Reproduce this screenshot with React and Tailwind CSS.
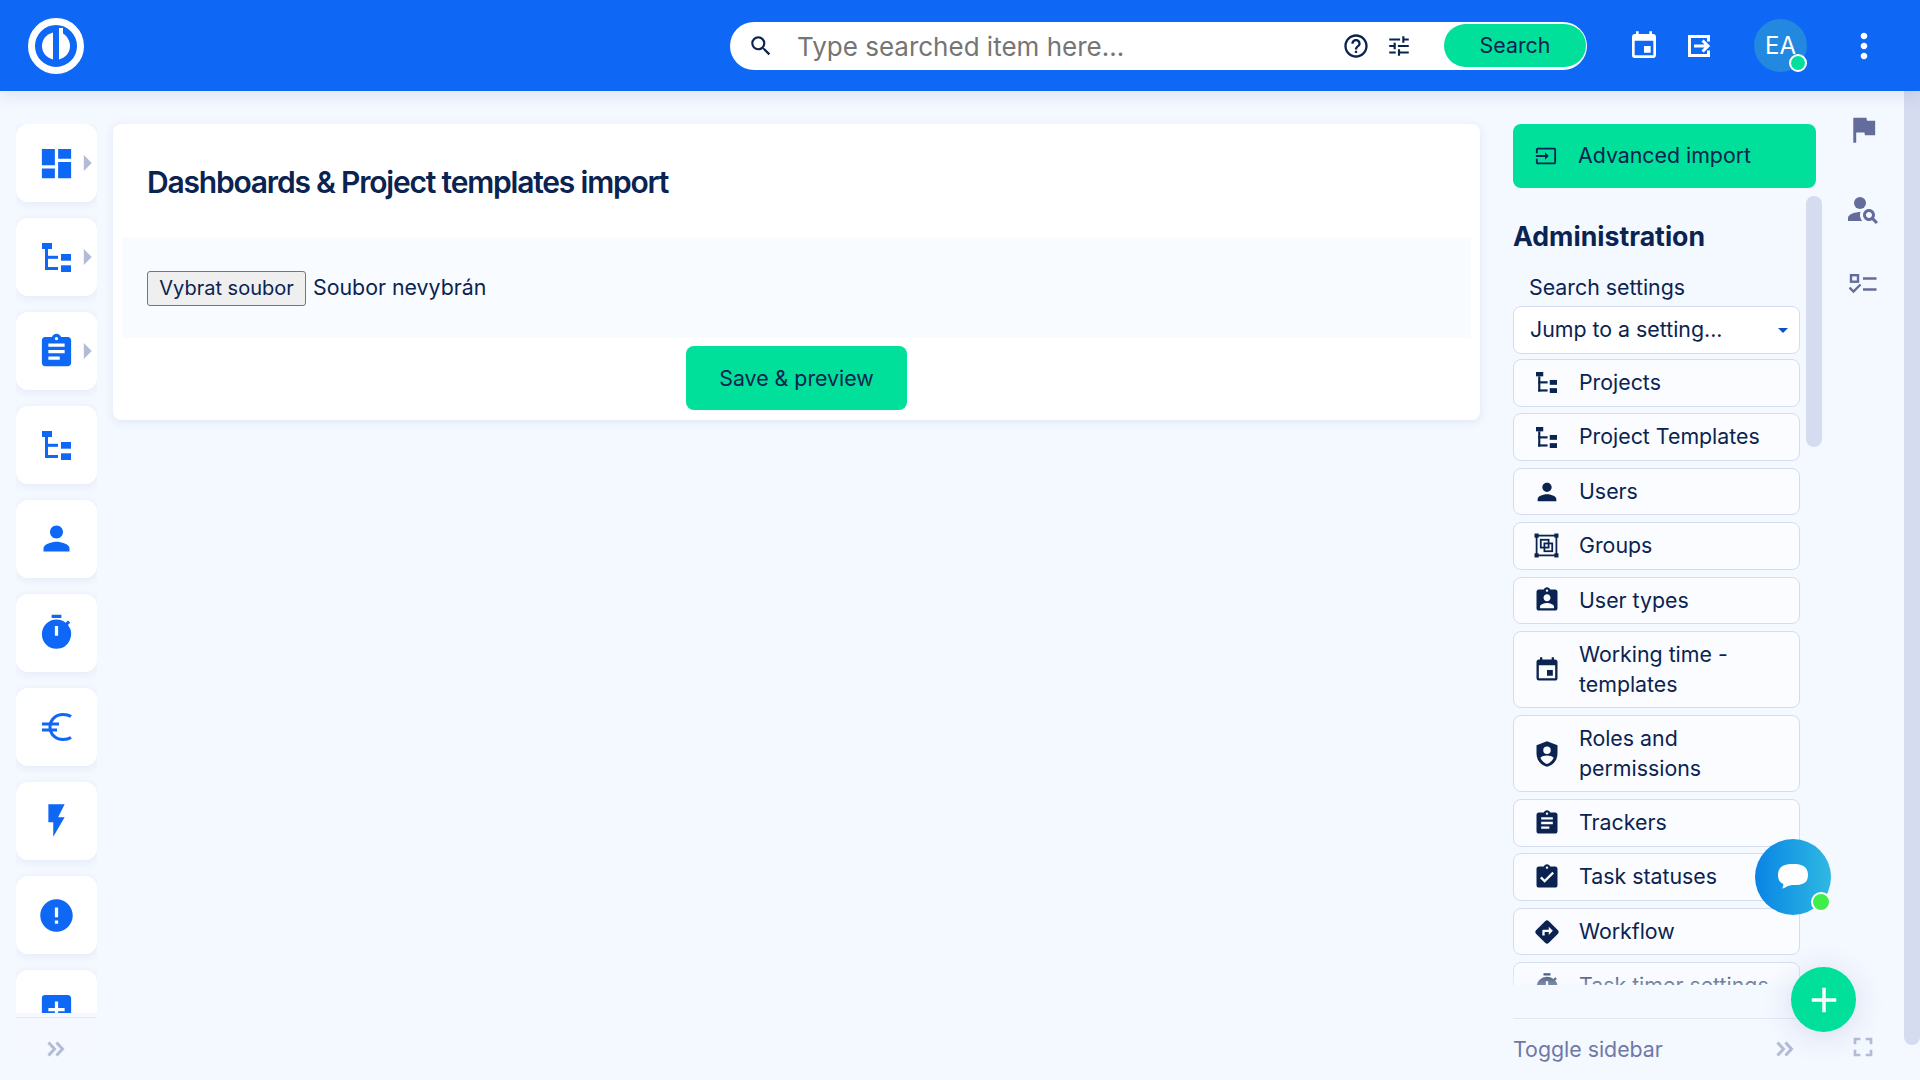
import {
  MdDashboard, MdAssignment, MdPerson, MdTimer, MdFlashOn, MdError, MdAddBox, MdSearch, MdHelpOutline, MdTune,
  MdEvent, MdMoreVert, MdFlag, MdPersonSearch, MdAssignmentInd, MdAssignmentTurnedIn, MdDirections,
  MdAdd, MdFullscreen, MdArrowRight, MdArrowDropDown, MdInput,
} from 'react-icons/md';

const font = "font-['Inter','Noto_Sans',sans-serif]";

function TreeIcon({ className }) {
  return (
    <svg viewBox="0 0 29 29" className={className} fill="currentColor">
      <rect x="0" y="0" width="10" height="6" />
      <rect x="3" y="6" width="3" height="21" />
      <rect x="3" y="12.800" width="13" height="3" />
      <rect x="3" y="24" width="13" height="3" />
      <rect x="19" y="11" width="10" height="6.700" />
      <rect x="19" y="22.300" width="10" height="6.700" />
    </svg>
  );
}

function GroupsIcon({ className }) {
  return (
    <svg viewBox="0 0 24 24" className={className} fill="none" stroke="currentColor" strokeWidth="1.700">
      <rect x="2.500" y="2.500" width="19" height="19" />
      <rect x="6.500" y="6.500" width="7.500" height="7.500" />
      <rect x="10" y="10" width="7.500" height="7.500" />
      <g fill="currentColor" stroke="none">
        <rect x="0.500" y="0.500" width="4" height="4" />
        <rect x="19.500" y="0.500" width="4" height="4" />
        <rect x="0.500" y="19.500" width="4" height="4" />
        <rect x="19.500" y="19.500" width="4" height="4" />
      </g>
    </svg>
  );
}

function ShieldIcon({ className }) {
  return (
    <svg viewBox="0 0 24 24" className={className} fill="currentColor">
      <path d="M12 1 3 4.500v7c0 5.500 3.800 10.300 9 11.500 5.200-1.200 9-6 9-11.500v-7L12 1zm0 4.500a3.200 3.200 0 1 1 0 6.400 3.200 3.200 0 0 1 0-6.400zm0 15c-2.600-.8-4.700-2.800-5.700-5.300 1.300-1.300 3.400-2 5.700-2s4.400.7 5.700 2c-1 2.500-3.100 4.500-5.700 5.300z" />
    </svg>
  );
}

function LogoIcon({ className }) {
  return (
    <svg viewBox="0 0 56 56" className={className}>
      <circle cx="28" cy="28" r="24.500" fill="none" stroke="#fff" strokeWidth="7" />
      <path d="M25 14.500v27C18 39.500 14 34.500 14 28s4-11.500 11-13.500z" fill="#fff" />
      <path d="M31 10v31.500c7-2 11-7 11-13.500 0-5.500-3-10-7-12.500V10h-4z" fill="#fff" />
    </svg>
  );
}

function ChatIcon({ className }) {
  return (
    <svg viewBox="0 0 32 28" className={className} fill="#fff">
      <path d="M16 1c9 0 15 2.500 15 11s-6 10-14 10c-3 0-5 .5-7 1.500-2 1-3.500 2-5 2 1-1.500 1.500-3 1.300-4.500C2.500 19.500 1 16 1 12 1 3.500 7 1 16 1z" />
    </svg>
  );
}

function EuroIcon({ className }) {
  return (
    <svg viewBox="0 0 30 28" className={className} fill="none" stroke="currentColor" strokeWidth="3">
      <path d="M29 3.500C26.500 1.800 24 1.500 21 1.500 13.500 1.500 8 7 8 14s5.500 12.500 13 12.500c3 0 5.500-.3 8-2" />
      <path d="M0 11h17M0 17h15" />
    </svg>
  );
}

function ExitIcon({ className }) {
  return (
    <svg viewBox="0 0 24 24" className={className} fill="currentColor">
      <path d="M1 1h22v6.500h-3V4H4v16h16v-3.500h3V23H1z" />
      <path d="M7 10.500h10.500l-3-3L16.600 5.400 23.200 12l-6.600 6.600-2.100-2.100 3-3H7z" />
    </svg>
  );
}

function CheckListIcon({ className }) {
  return (
    <svg viewBox="0 0 28 21" className={className} fill="none" stroke="currentColor" strokeWidth="2.400">
      <rect x="2" y="1.200" width="7" height="6.500" />
      <path d="M14 4.500h13.500M14 15.500h13.500" />
      <path d="M0.500 13.500l4 4 7-7" />
    </svg>
  );
}

function ChevronsIcon({ className }) {
  return (
    <svg viewBox="0 0 18 16" className={className} fill="none" stroke="currentColor" strokeWidth="3">
      <path d="M1.500 1.500 7.500 8l-6 6.500M9.500 1.500 15.500 8l-6 6.500" />
    </svg>
  );
}

const tiles = [
  { icon: MdDashboard, arrow: true, size: 'w-[39px] h-[39px]' },
  { icon: TreeIcon, arrow: true, size: 'w-[29px] h-[29px]' },
  { icon: MdAssignment, arrow: true, size: 'w-[39px] h-[39px]' },
  { icon: TreeIcon, size: 'w-[29px] h-[29px]' },
  { icon: MdPerson, size: 'w-[39px] h-[39px] -mt-[1px]' },
  { icon: MdTimer, size: 'w-[39px] h-[39px] -mt-[1px]' },
  { icon: EuroIcon, size: 'w-[30px] h-[28px]' },
  { icon: MdFlashOn, size: 'w-[39px] h-[39px] -mt-[1px]' },
  { icon: MdError, size: 'w-[39px] h-[39px]' },
  { icon: MdAddBox, size: 'w-[39px] h-[39px]' },
];

const settings = [
  { icon: TreeIcon, label: 'Projects', size: 'w-[21px] h-[21px]' },
  { icon: TreeIcon, label: 'Project Templates', size: 'w-[21px] h-[21px]' },
  { icon: MdPerson, label: 'Users', size: 'w-[28px] h-[28px]' },
  { icon: GroupsIcon, label: 'Groups', size: 'w-[25px] h-[25px]' },
  { icon: MdAssignmentInd, label: 'User types', size: 'w-[28px] h-[28px]' },
  { icon: MdEvent, label: 'Working time - templates', size: 'w-[28px] h-[28px]' },
  { icon: ShieldIcon, label: 'Roles and permissions', size: 'w-[28px] h-[28px]' },
  { icon: MdAssignment, label: 'Trackers', size: 'w-[28px] h-[28px]' },
  { icon: MdAssignmentTurnedIn, label: 'Task statuses', size: 'w-[28px] h-[28px]' },
  { icon: MdDirections, label: 'Workflow', size: 'w-[28px] h-[28px]' },
  { icon: MdTimer, label: 'Task timer settings', size: 'w-[28px] h-[28px]' },
];

export default function App() {
  return (
    <div className={`${font} relative h-screen overflow-hidden bg-[#f4f8ff] text-[21.33px] text-[#0a2350]`}>
      {/* Header */}
      <header className="relative z-10 h-[91px] bg-[#0f67f5] flex items-center shadow-[0_4px_16px_rgba(40,70,140,0.12)]">
        <LogoIcon className="ml-[28px] w-[56px] h-[56px] shrink-0" />
        <div className="ml-[646px] w-[857px] h-[48px] rounded-full bg-white flex items-center shrink-0">
          <MdSearch className="ml-[18px] w-[26px] h-[26px] text-[#0a2350] shrink-0" />
          <span className="ml-[23px] pt-[1px] flex-1 text-[26px] text-[#757575]">Type searched item here...</span>
          <MdHelpOutline className="w-[28px] h-[28px] shrink-0" />
          <MdTune className="ml-[16px] w-[26px] h-[26px] shrink-0" />
          <div className="ml-[32px] mr-[1px] w-[142px] h-[43px] rounded-full bg-[#00e09b] flex items-center justify-center">Search</div>
        </div>
        <MdEvent className="ml-[41px] w-[32px] h-[32px] text-white shrink-0" />
        <ExitIcon className="ml-[27px] w-[24px] h-[24px] text-white shrink-0" />
        <div className="relative ml-[43px] w-[53px] h-[53px] rounded-full bg-[#2288e0] flex items-center justify-center text-white text-[24px] shrink-0">
          EA
          <span className="absolute right-0 bottom-0 w-[18px] h-[18px] rounded-full bg-[#00e09b] border-2 border-white" />
        </div>
        <MdMoreVert className="ml-[37px] w-[40px] h-[40px] text-white shrink-0" />
      </header>

      <div className="flex h-[989px]">
        {/* Tile rail */}
        <aside className="relative ml-[16px] mt-[33px] w-[81px] h-[925px] shrink-0">
          <div className="h-full overflow-hidden rounded-b-[12px]">
            <div className="flex flex-col gap-[16px]">
              {tiles.map((t, i) => (
                <div key={i} className="relative h-[78px] shrink-0 rounded-[12px] bg-white flex items-center justify-center shadow-[0_2px_8px_rgba(40,70,140,0.08)]">
                  <t.icon className={`${t.size} text-[#0f67f5]`} />
                  {t.arrow && <MdArrowRight className="absolute right-[-9px] w-[38px] h-[38px] text-[#b4bbd6]" />}
                </div>
              ))}
            </div>
          </div>
          <div className="absolute left-0 right-0 bottom-0 h-[36px] pt-[4px] bg-[#f5f8fe]">
            <div className="h-[1px] bg-[#e6eaf4]" />
          </div>
          <ChevronsIcon className="absolute left-[31px] bottom-[-8px] w-[18px] h-[16px] text-[#b4bbd6]" />
        </aside>

        {/* Main card */}
        <main className="ml-[16px] mt-[33px] w-[1367px] h-[296px] shrink-0 rounded-[8px] bg-white flex flex-col shadow-[0_2px_10px_rgba(40,70,140,0.1)]">
          <h1 className="pl-[34px] pt-[36px] h-[113px] text-[30px] font-semibold tracking-[-1.2px] text-[#0a2350]">Dashboards &amp; Project templates import</h1>
          <div className="mx-[9px] h-[101px] bg-[#f8fbff] pl-[25px] flex items-center">
            <button className="mt-[1px] h-[35px] w-[159px] rounded-[3px] border border-[#767676] bg-[#efefef] text-[20px] text-[#0a2350]">Vybrat soubor</button>
            <span className="ml-[7px]">Soubor nevybrán</span>
          </div>
          <div className="flex justify-center mt-[8px]">
            <button className="w-[221px] h-[64px] pt-[2px] rounded-[8px] bg-[#00e09b]">Save &amp; preview</button>
          </div>
        </main>

        {/* Admin sidebar */}
        <aside className="relative ml-[33px] mt-[33px] w-[309px] h-[956px] shrink-0">
          <div className="w-[303px] h-[64px] rounded-[8px] bg-[#00e09b] flex items-center">
            <MdInput className="ml-[22px] w-[22px] h-[22px] shrink-0" />
            <span className="ml-[21px]">Advanced import</span>
          </div>
          <div className="absolute left-[293px] top-[72px] w-[16px] h-[251px] rounded-full bg-[#d5dcf0]" />
          <div className="relative w-[287px] h-[797px] overflow-hidden">
            <h2 className="mt-[30px] text-[26.67px] font-bold leading-[36px]">Administration</h2>
            <div className="mt-[18px] ml-[16px] leading-[30px]">Search settings</div>
            <div className="mt-[4px] h-[48px] rounded-[8px] border border-[#d5dcf0] bg-white pl-[16px] pr-[4px] flex items-center justify-between">
              Jump to a setting...
              <MdArrowDropDown className="w-[24px] h-[24px] text-[#0f4fc0]" />
            </div>
            <div className="mt-[5px] flex flex-col gap-[6.800px]">
              {settings.map(s => (
                <div key={s.label} className="rounded-[8px] border border-[#d5dcf0] bg-[#fafcff] min-h-[47px] py-[8px] flex items-center leading-[29.600px]">
                  <span className="w-[65px] shrink-0 flex justify-center">
                    <s.icon className={s.size} />
                  </span>
                  <span>{s.label}</span>
                </div>
              ))}
            </div>
            <div className="absolute left-0 right-0 bottom-0 h-[24px] bg-gradient-to-b from-[#f4f8ff]/0 to-[#f4f8ff]/50" />
          </div>
        </aside>

        {/* Right rail */}
        <aside className="ml-[11px] w-[60px] shrink-0 flex flex-col items-center pt-[21px] text-[#646c9b]">
          <MdFlag className="w-[35px] h-[35px]" />
          <MdPersonSearch className="mt-[44px] w-[36px] h-[36px]" />
          <CheckListIcon className="mt-[47px] w-[28px] h-[21px]" />
        </aside>
      </div>

      {/* Sidebar footer */}
      <div className="absolute left-[1513px] top-[985px] w-[287px] h-[95px] bg-[#f4f8ff]">
        <div className="mt-[33px] h-[1px] bg-[#e3e7f2]" />
        <div className="h-[62px] flex items-center justify-between text-[#6f78a6]">
          Toggle sidebar
          <ChevronsIcon className="mr-[6px] mb-[3px] w-[18px] h-[16px] text-[#b4bbd6]" />
        </div>
      </div>
      <MdFullscreen className="absolute left-[1847px] top-[1031px] w-[32px] h-[32px] text-[#b4bbd6]" />

      {/* Floating buttons */}
      <div className="absolute left-[1755px] top-[839px] w-[76px] h-[76px] rounded-full bg-gradient-to-r from-[#0a84e4] to-[#2fb8e2] flex items-center justify-center">
        <ChatIcon className="w-[32px] h-[28px]" />
        <span className="absolute right-[0px] bottom-[3px] w-[20px] h-[20px] rounded-full bg-[#3fee4a] border-2 border-white" />
      </div>
      <div className="absolute left-[1791px] top-[967px] w-[65px] h-[65px] rounded-full bg-[#00e09b] flex items-center justify-center shadow-[0_4px_30px_rgba(40,70,140,0.15)]">
        <MdAdd className="w-[42px] h-[42px] text-white" />
      </div>

      {/* Page scrollbar */}
      <div className="absolute right-0 top-0 w-[16px] h-[1045px] rounded-b-full bg-[#d5dcf0]" />
    </div>
  );
}
